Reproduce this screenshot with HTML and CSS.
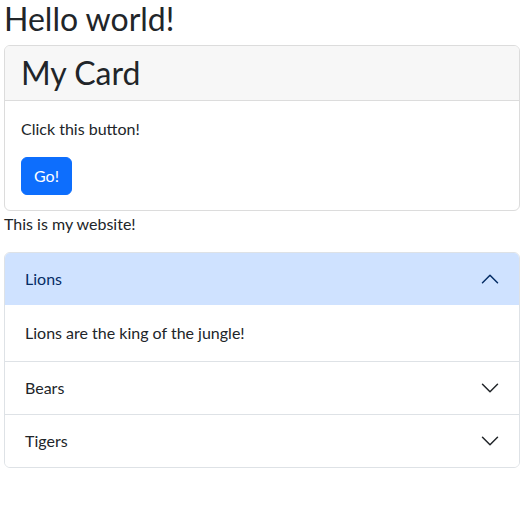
FILE: index.html
```html
<!DOCTYPE html>
<html lang="en">
<head>
<meta charset="utf-8">
<title>Hello world!</title>
<link rel="stylesheet" href="styles.css">
</head>
<body>
<main class="page">
  <h1 class="title">Hello world!</h1>

  <section class="card">
    <header class="card-header">
      <h1 class="card-title">My Card</h1>
    </header>
    <div class="card-body">
      <p class="card-text">Click this button!</p>
      <button class="btn" type="button">Go!</button>
    </div>
  </section>

  <p class="lead-text">This is my website!</p>

  <div class="accordion">
    <div class="acc-item">
      <button class="acc-btn is-open" type="button">
        <span>Lions</span>
        <svg class="chev" viewBox="0 0 16 16" width="20" height="20" aria-hidden="true"><path d="M2 5L8 11L14 5" fill="none" stroke="currentColor" stroke-width="1.2" stroke-linecap="round" stroke-linejoin="round"/></svg>
      </button>
      <div class="acc-body">Lions are the king of the jungle!</div>
    </div>
    <div class="acc-item">
      <button class="acc-btn" type="button">
        <span>Bears</span>
        <svg class="chev" viewBox="0 0 16 16" width="20" height="20" aria-hidden="true"><path d="M2 5L8 11L14 5" fill="none" stroke="currentColor" stroke-width="1.2" stroke-linecap="round" stroke-linejoin="round"/></svg>
      </button>
    </div>
    <div class="acc-item">
      <button class="acc-btn" type="button">
        <span>Tigers</span>
        <svg class="chev" viewBox="0 0 16 16" width="20" height="20" aria-hidden="true"><path d="M2 5L8 11L14 5" fill="none" stroke="currentColor" stroke-width="1.2" stroke-linecap="round" stroke-linejoin="round"/></svg>
      </button>
    </div>
  </div>
</main>
</body>
</html>
```
FILE: styles.css
```css
* { box-sizing: border-box; }

html, body {
  margin: 0;
  background: #fff;
}

body {
  font-family: Lato, "Liberation Sans", sans-serif;
  font-size: 16px;
  line-height: 24px;
  color: #212529;
}

.page {
  width: 516px;
  margin-left: 4px;
}

.title {
  margin: 0 0 8px;
  font-size: 32px;
  font-weight: 400;
  line-height: 37px;
}

.card {
  border: 1px solid #dcdcdc;
  border-radius: 6px;
  overflow: hidden;
}

.card-header {
  padding: 8px 16px;
  background: #f7f7f7;
  border-bottom: 1px solid #dcdcdc;
}

.card-title {
  margin: 0;
  font-size: 32px;
  font-weight: 400;
  line-height: 38px;
}

.card-body {
  padding: 16px 16px 15px;
}

.card-text {
  margin: 0 0 16px;
}

.btn {
  display: block;
  height: 38px;
  padding: 0 12px;
  border: 1px solid #0d6efd;
  border-radius: 6px;
  background: #0d6efd;
  color: #fff;
  font-family: inherit;
  font-size: 16px;
  line-height: 24px;
}

.lead-text {
  margin: 0 0 16px;
  padding-top: 1px;
}

.accordion {
  border: 1px solid #dee2e6;
  border-radius: 6px;
  overflow: hidden;
}

.acc-item + .acc-item {
  border-top: 1px solid #dee2e6;
}

.acc-btn {
  display: flex;
  align-items: center;
  width: 100%;
  height: 52px;
  padding: 0 19px 0 20px;
  border: 0;
  background: #fff;
  color: #212529;
  font-family: inherit;
  font-size: 16px;
  line-height: 24px;
  text-align: left;
}

.acc-btn.is-open {
  background: #cfe2ff;
  color: #052c65;
}

.chev {
  margin-left: auto;
  flex-shrink: 0;
}

.acc-btn.is-open .chev {
  transform: rotate(180deg);
}

.acc-body {
  padding: 16px 20px;
}
```
